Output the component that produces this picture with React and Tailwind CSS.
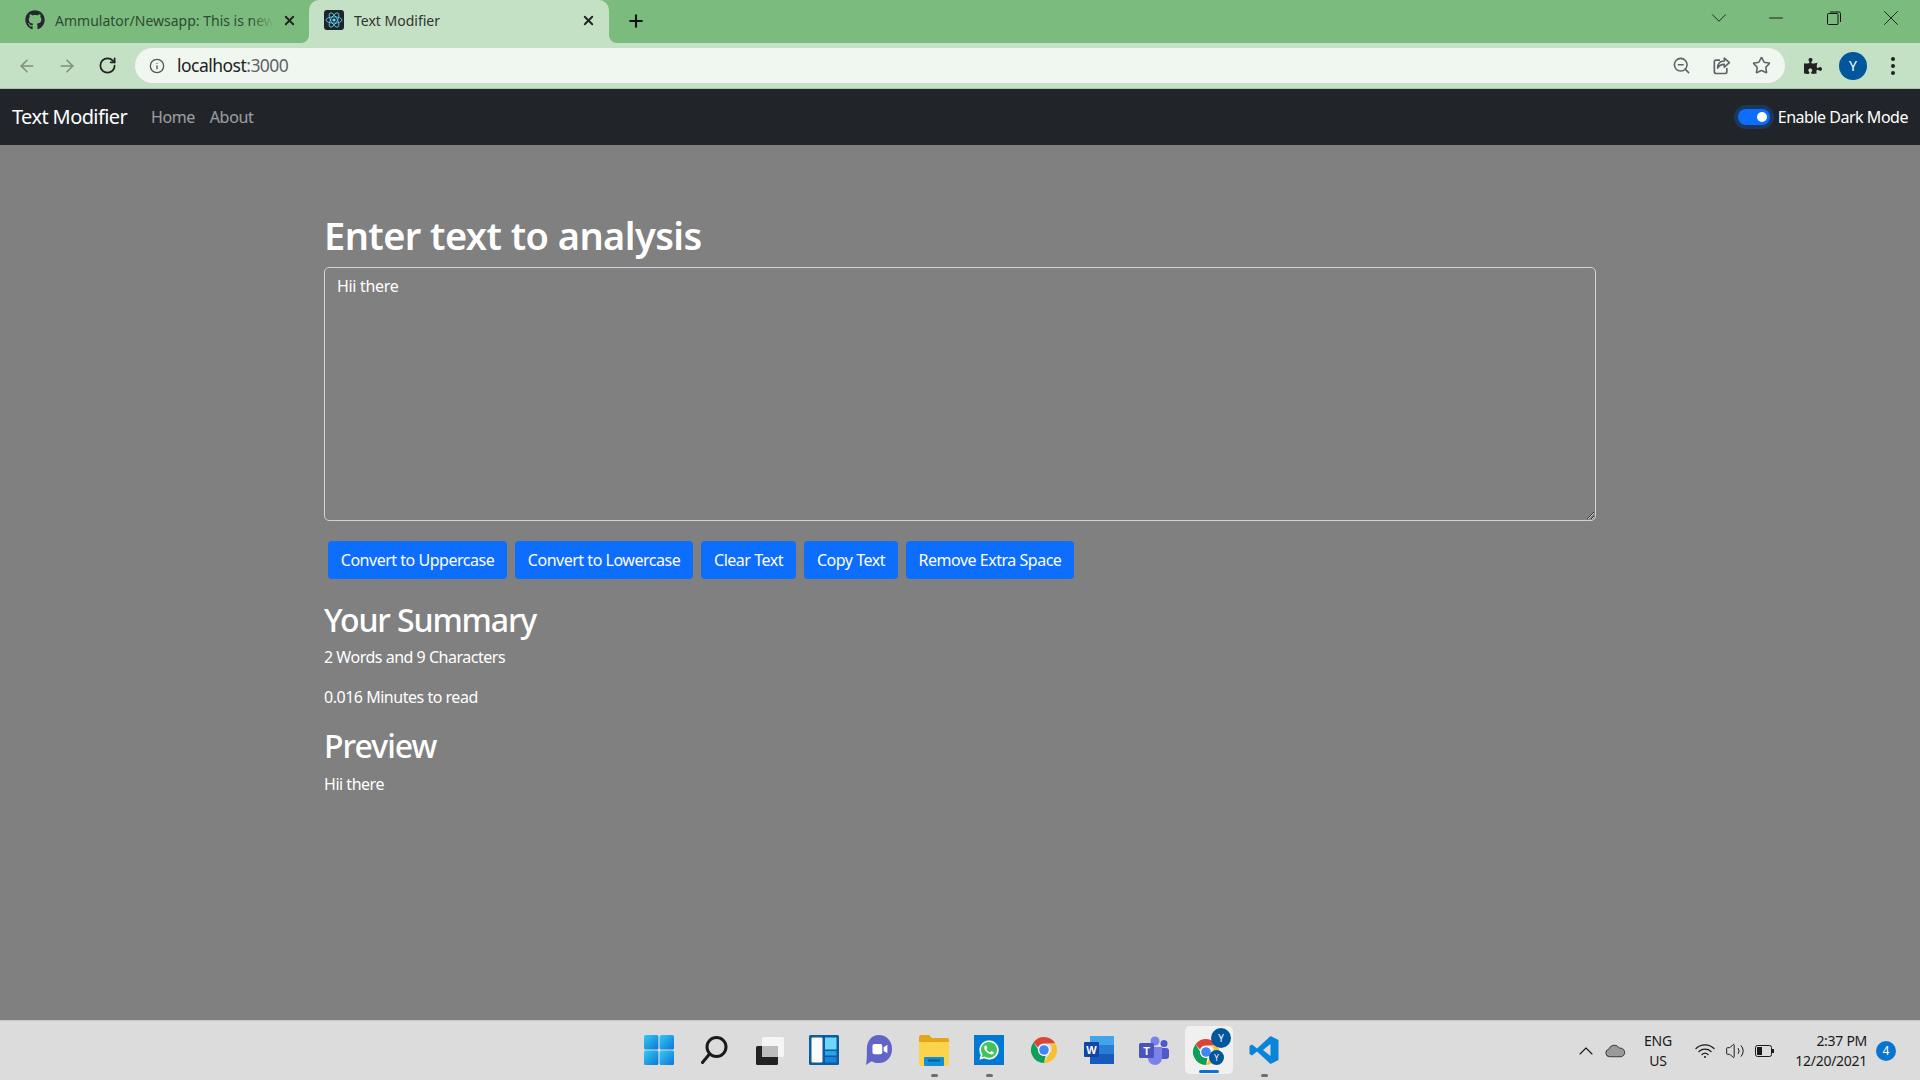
import React from 'react';
import { ArrowLeft, ArrowRight, RotateCw, Info, ZoomOut, Star, X, Plus, ChevronDown, ChevronUp, Minus, Volume2 } from 'lucide-react';
import { FaGithub, FaWhatsapp, FaPuzzlePiece } from 'react-icons/fa';

const font = 'font-["Noto_Sans",sans-serif]';

function ReactLogo() {
  return (
    <svg viewBox="0 0 20 20" className="w-5 h-5 rounded-[3px] bg-[#20232a] shrink-0">
      <circle cx="10" cy="10" r="1.6" fill="#61dafb" />
      <g fill="none" stroke="#61dafb" strokeWidth="0.8">
        <ellipse cx="10" cy="10" rx="8" ry="3.2" />
        <ellipse cx="10" cy="10" rx="8" ry="3.2" transform="rotate(60 10 10)" />
        <ellipse cx="10" cy="10" rx="8" ry="3.2" transform="rotate(120 10 10)" />
      </g>
    </svg>
  );
}

function ChromeLogo({ size = 28 }) {
  return (
    <svg viewBox="0 0 28 28" width={size} height={size}>
      <path d="M14 1a13 13 0 0 1 11.3 6.5H14a6.5 6.5 0 0 0-6 4L3.6 6.2A13 13 0 0 1 14 1z" fill="#db4437" />
      <path d="M25.3 7.5A13 13 0 0 1 14 27l5.6-9.7a6.5 6.5 0 0 0 0-9.8z" fill="#fbc02d" />
      <path d="M14 27A13 13 0 0 1 3.6 6.2L8 13.5a6.5 6.5 0 0 0 7.5 6.3z" fill="#0f9d58" />
      <circle cx="14" cy="14" r="6" fill="#fff" />
      <circle cx="14" cy="14" r="4.8" fill="#4285f4" />
    </svg>
  );
}

function WindowButton({ children }) {
  return <div className="w-[57.5px] h-[36px] flex items-center justify-center text-[#111]">{children}</div>;
}

function BrowserChrome() {
  return (
    <div className={`${font} shrink-0`}>
      <div className="h-[43px] bg-[#7bbc7e] flex items-end">
        <div className="w-[301px] h-full flex items-center pl-[25px] pr-[4px] pb-[3px]">
          <FaGithub className="w-5 h-5 text-[#24292f] shrink-0" />
          <div className="relative ml-[10px] w-[220px] overflow-hidden whitespace-nowrap text-[14px] text-[#2f4a32]">
            Ammulator/Newsapp: This is new
            <div className="absolute right-0 top-0 bottom-0 w-[24px] bg-gradient-to-r from-transparent to-[#7bbc7e]"></div>
          </div>
          <X className="w-[15px] h-[15px] ml-[8px] text-[#222]" strokeWidth={3} />
        </div>
        <div className="w-2 h-2 bg-[#c4e1c5]"><div className="w-full h-full bg-[#7bbc7e] rounded-br-lg"></div></div>
        <div className="w-[300px] h-[43px] bg-[#c4e1c5] rounded-t-[10px] flex items-center pl-[15px] pr-[13px] pb-[3px]">
          <ReactLogo />
          <span className="ml-[10px] flex-1 text-[14px] text-[#333]">Text Modifier</span>
          <X className="w-[15px] h-[15px] text-[#222]" strokeWidth={3} />
        </div>
        <div className="w-2 h-2 bg-[#c4e1c5]"><div className="w-full h-full bg-[#7bbc7e] rounded-bl-lg"></div></div>
        <div className="h-full flex items-center ml-[9px] pb-[1px]">
          <Plus className="w-[20px] h-[20px] text-[#111]" strokeWidth={2.5} />
        </div>
        <div className="ml-auto h-full flex items-start">
          <WindowButton><ChevronDown className="w-[26px] h-[26px]" strokeWidth={0.8} /></WindowButton>
          <WindowButton><Minus className="w-[22px] h-[22px]" strokeWidth={1} /></WindowButton>
          <WindowButton>
            <svg viewBox="0 0 14 14" className="w-[14px] h-[14px]" fill="none" stroke="#111" strokeWidth="1">
              <rect x="0.5" y="2.5" width="10.5" height="11" rx="1" />
              <path d="M3 1h9a1.5 1.5 0 0 1 1.5 1.5V11" />
            </svg>
          </WindowButton>
          <WindowButton><X className="w-[26px] h-[26px]" strokeWidth={0.8} /></WindowButton>
        </div>
      </div>
      <div className="h-[46px] bg-[#c4e1c5] border-b border-[#a9c4aa] flex items-center">
        <ArrowLeft className="w-[20px] h-[20px] ml-[17px] text-[#7d8f7e]" strokeWidth={1.8} />
        <ArrowRight className="w-[20px] h-[20px] ml-[20px] text-[#7d8f7e]" strokeWidth={1.8} />
        <RotateCw className="w-[19px] h-[19px] ml-[21px] text-[#222]" strokeWidth={2.2} />
        <div className="w-[1650px] h-[35px] ml-[18px] rounded-full bg-[#f0f7f0] flex items-center pl-[14px] pr-[14px]">
          <Info className="w-[16px] h-[16px] text-[#555]" strokeWidth={2} />
          <span className="ml-[12px] text-[17.5px] tracking-[-0.03em] text-[#202124]">localhost<span className="text-[#5f6368]">:3000</span></span>
          <ZoomOut className="w-[19px] h-[19px] ml-auto text-[#5f6368]" strokeWidth={2} />
          <svg viewBox="0 0 24 24" className="w-[20px] h-[20px] ml-[20px]" fill="none" stroke="#5f6368" strokeWidth="2" strokeLinejoin="round" strokeLinecap="round">
            <path d="M10 5H6a2 2 0 0 0-2 2v12a2 2 0 0 0 2 2h11a2 2 0 0 0 2-2v-4" />
            <path d="M22 8l-6-5.500v3.500c-5 0-8 3-8 8.500 2-3.500 4.500-4.500 8-4.500v3.500z" />
          </svg>
          <Star className="w-[19px] h-[19px] ml-[21px] text-[#5f6368]" strokeWidth={2} />
        </div>
        <FaPuzzlePiece className="w-[18px] h-[18px] ml-[19px] text-[#222]" />
        <div className="w-[28px] h-[28px] ml-[17px] rounded-full bg-[#01579b] flex items-center justify-center text-white text-[14px]">Y</div>
        <div className="ml-[24px] flex flex-col gap-[3px]">
          <div className="w-[4px] h-[4px] rounded-full bg-[#222]"></div>
          <div className="w-[4px] h-[4px] rounded-full bg-[#222]"></div>
          <div className="w-[4px] h-[4px] rounded-full bg-[#222]"></div>
        </div>
      </div>
    </div>
  );
}

function Navbar() {
  return (
    <nav className={`${font} h-[56px] shrink-0 bg-[#212529] flex items-center pl-[12px] pr-[12px]`}>
      <span className="text-[20px] tracking-[-0.03em] text-white">Text Modifier</span>
      <a className="ml-[24px] text-[16px] tracking-[-0.03em] text-white/55">Home</a>
      <a className="ml-[15px] text-[16px] tracking-[-0.02em] text-white/55">About</a>
      <div className="ml-auto flex items-center">
        <div className="w-[32px] h-[16px] rounded-full bg-[#0d6efd] flex items-center justify-end pr-[3px] ring-4 ring-[#0d6efd]/25">
          <div className="w-[10px] h-[10px] rounded-full bg-white"></div>
        </div>
        <span className="ml-[8px] text-[16px] tracking-[-0.03em] text-white">Enable Dark Mode</span>
      </div>
    </nav>
  );
}

function Main() {
  const buttons = [
    { label: 'Convert to Uppercase', w: 'w-[179px]' },
    { label: 'Convert to Lowercase', w: 'w-[178px]' },
    { label: 'Clear Text', w: 'w-[95px]' },
    { label: 'Copy Text', w: 'w-[94px]' },
    { label: 'Remove Extra Space', w: 'w-[168px]' },
  ];

  return (
    <main className={`${font} flex-1 bg-[#808080] text-white overflow-hidden`}>
      <div className="w-[1272px] ml-[324px]">
        <h1 className="mt-[63px] mb-[5px] text-[38px] leading-[54px] font-semibold tracking-[-0.015em]">Enter text to analysis</h1>
        <textarea
          readOnly
          defaultValue="Hii there"
          className="block w-full h-[254px] bg-[#808080] border border-[#ced4da] rounded-[5px] px-[12px] py-[6px] text-[16px] leading-[24px] tracking-[-0.02em] text-white outline-none resize-y"
        />
        <div className="mt-[20px] ml-[4px] flex gap-[8px]">
          {buttons.map((b) => (
            <button key={b.label} className={`${b.w} h-[38px] bg-[#0d6efd] rounded-[4px] text-[16px] tracking-[-0.03em] text-white`}>
              {b.label}
            </button>
          ))}
        </div>
        <h2 className="mt-[20px] text-[32px] leading-[42px] font-medium tracking-[-0.035em]">Your Summary</h2>
        <p className="mt-[4px] text-[16px] leading-[24px] tracking-[-0.03em]">2 Words and 9 Characters</p>
        <p className="mt-[16px] text-[16px] leading-[24px] tracking-[-0.03em]">0.016 Minutes to read</p>
        <h2 className="mt-[16px] text-[32px] leading-[42px] font-medium tracking-[-0.03em]">Preview</h2>
        <p className="mt-[5px] text-[16px] leading-[24px] tracking-[-0.03em]">Hii there</p>
      </div>
    </main>
  );
}

function TaskIcon({ children, dot, active }) {
  return (
    <div className={`relative w-[48px] h-[48px] flex items-center justify-center rounded-[5px] ${active ? 'bg-[#f0f0f0]' : ''}`}>
      {children}
      {dot && <div className="absolute bottom-[-3px] w-[7px] h-[3px] rounded-full bg-[#6d6d6d]"></div>}
      {active && <div className="absolute bottom-[1px] w-[20px] h-[3px] rounded-full bg-[#0a74d1]"></div>}
    </div>
  );
}

function Taskbar() {
  return (
    <div className={`${font} h-[60px] shrink-0 bg-[#dcdcdc] border-t border-[#c8c8c8] grid grid-cols-[1fr_auto_1fr] items-center`}>
      <div></div>
      <div className="flex items-center gap-[7px] ml-[3px] mb-[1px]">
        <TaskIcon>
          <svg viewBox="0 0 30 30" width="30" height="30">
            <defs>
              <linearGradient id="win" x1="0" y1="0" x2="1" y2="1"><stop offset="0" stopColor="#35c8f5" /><stop offset="1" stopColor="#0a78d6" /></linearGradient>
            </defs>
            <rect x="0" y="0" width="14.4" height="14.4" rx="1.5" fill="url(#win)" />
            <rect x="15.6" y="0" width="14.4" height="14.4" rx="1.5" fill="url(#win)" />
            <rect x="0" y="15.6" width="14.4" height="14.4" rx="1.5" fill="url(#win)" />
            <rect x="15.6" y="15.6" width="14.4" height="14.4" rx="1.5" fill="url(#win)" />
          </svg>
        </TaskIcon>
        <TaskIcon>
          <svg viewBox="0 0 30 30" width="30" height="30" fill="none" stroke="#1a1a1a" strokeWidth="3" strokeLinecap="round">
            <circle cx="17.5" cy="12" r="9.5" />
            <path d="M10.5 19 L3.5 27.5" />
          </svg>
        </TaskIcon>
        <TaskIcon>
          <svg viewBox="0 0 30 30" width="30" height="30">
            <rect x="2" y="11" width="22" height="19" rx="1.5" fill="#222" />
            <rect x="8" y="2" width="22" height="20" rx="1.5" fill="#f5f5f5" />
            <rect x="8" y="11" width="16" height="11" fill="#bdbdbd" />
          </svg>
        </TaskIcon>
        <TaskIcon>
          <svg viewBox="0 0 30 30" width="30" height="30">
            <rect x="0" y="0" width="30" height="30" rx="1.5" fill="#0d5a9e" />
            <rect x="2.5" y="2.5" width="11" height="25" rx="1" fill="#fafafa" />
            <rect x="16" y="2.5" width="11.5" height="12" fill="#6ed6f7" />
            <rect x="16" y="16" width="11.5" height="4.5" fill="#2aa5ea" />
            <rect x="16" y="22" width="11.5" height="5.5" fill="#1487dc" />
          </svg>
        </TaskIcon>
        <TaskIcon>
          <svg viewBox="0 0 30 34" width="28" height="32">
            <path d="M15 1c8 0 14 6.5 14 15s-6 15-14 15c-3 0-6-.6-8-2L1 33c1-4 1-8 1-17C2 7.500 7 1 15 1z" fill="#6264c8" />
            <rect x="8" y="10.500" width="10.500" height="11" rx="2" fill="#fff" />
            <path d="M20 14l4-2.500v9L20 18z" fill="#fff" />
          </svg>
        </TaskIcon>
        <TaskIcon dot>
          <svg viewBox="0 0 30 34" width="30" height="34">
            <path d="M0 4a2 2 0 0 1 2-2h8l3 3h15a2 2 0 0 1 2 2v4H0z" fill="#e6a417" />
            <path d="M0 9h30v22a2 2 0 0 1-2 2H2a2 2 0 0 1-2-2z" fill="#fcd34d" />
            <rect x="5" y="24" width="20" height="9" rx="1" fill="#0f8fd6" />
            <rect x="9" y="26.500" width="12" height="2" fill="#0c5f96" />
          </svg>
        </TaskIcon>
        <TaskIcon dot>
          <div className="w-[30px] h-[30px] bg-[#0078d4] flex items-center justify-center">
            <div className="w-[20px] h-[20px] rounded-full bg-[#3fc35a] flex items-center justify-center">
              <FaWhatsapp className="w-[22px] h-[22px] text-white shrink-0" />
            </div>
          </div>
        </TaskIcon>
        <TaskIcon><ChromeLogo /></TaskIcon>
        <TaskIcon>
          <svg viewBox="0 0 30 30" width="30" height="30">
            <rect x="6" y="1" width="24" height="9" fill="#41a5ee" />
            <rect x="6" y="10" width="24" height="9" fill="#2b7cd3" />
            <rect x="6" y="19" width="24" height="10" fill="#185abd" />
            <rect x="0" y="7" width="15" height="15" rx="1" fill="#1046a8" />
            <text x="7.500" y="18.500" textAnchor="middle" fontSize="11" fontWeight="700" fill="#fff" fontFamily="Liberation Sans, sans-serif">W</text>
          </svg>
        </TaskIcon>
        <TaskIcon>
          <svg viewBox="0 0 30 30" width="30" height="30">
            <circle cx="25" cy="8.500" r="3.500" fill="#5059c9" />
            <rect x="20" y="13" width="10" height="11" rx="3" fill="#5059c9" />
            <circle cx="16" cy="6" r="4.500" fill="#7b83eb" />
            <path d="M9 12h14v11a7 7 0 0 1-14 0z" fill="#7b83eb" />
            <rect x="0" y="8" width="15" height="15" rx="1.500" fill="#4b53bc" />
            <text x="7.500" y="19.500" textAnchor="middle" fontSize="11" fontWeight="700" fill="#fff" fontFamily="Liberation Sans, sans-serif">T</text>
          </svg>
        </TaskIcon>
        <TaskIcon active>
          <div className="mt-[3px] mr-[6px]"><ChromeLogo /></div>
          <div className="absolute right-[2px] top-[2px] w-[20px] h-[20px] rounded-full bg-[#01579b] text-white text-[10px] flex items-center justify-center">Y</div>
          <div className="absolute right-[9px] bottom-[9px] w-[15px] h-[15px] rounded-full bg-[#01579b] text-white text-[8px] flex items-center justify-center">Y</div>
        </TaskIcon>
        <TaskIcon dot>
          <svg viewBox="0 0 30 30" width="30" height="30">
            <path d="M21.500 1 L29.500 5 V25 L21.500 29 L8 16.500 L3 20.500 L0.500 19 V11 L3 9.500 L8 13.500 Z M21.500 9 L14 15 L21.500 21 Z" fill="#0a84d8" fillRule="evenodd" />
          </svg>
        </TaskIcon>
      </div>
      <div className="flex items-center justify-end text-[#1a1a1a]">
        <ChevronUp className="w-[24px] h-[24px]" strokeWidth={1.1} />
        <svg viewBox="0 0 22 14" className="w-[21px] h-[14px] ml-[7px]">
          <path d="M5 13a4 4 0 0 1-1-7.900A6 6 0 0 1 15 4a4.500 4.500 0 0 1 2 9z" fill="#9a9a9a" stroke="#333" strokeWidth="1" />
        </svg>
        <div className="ml-[16px] w-[32px] text-center text-[14px] leading-[20px] tracking-[-0.02em]">
          <div>ENG</div>
          <div>US</div>
        </div>
        <svg viewBox="0 0 20 16" className="w-[20px] h-[16px] ml-[21px]" fill="none" stroke="#1a1a1a" strokeWidth="1.300" strokeLinecap="round">
          <path d="M1 5.500a13 13 0 0 1 18 0" />
          <path d="M4 8.500a9 9 0 0 1 12 0" />
          <path d="M7 11.500a4.500 4.500 0 0 1 6 0" />
          <circle cx="10" cy="14" r="1" fill="#1a1a1a" stroke="none" />
        </svg>
        <Volume2 className="w-[20px] h-[20px] ml-[10px]" strokeWidth={1.2} />
        <svg viewBox="0 0 20 12" className="w-[20px] h-[12px] ml-[10px]" fill="none">
          <rect x="0.500" y="0.500" width="16" height="11" rx="2" stroke="#1a1a1a" />
          <rect x="2" y="2" width="5" height="8" fill="#1a1a1a" />
          <rect x="17" y="4" width="2" height="4" fill="#1a1a1a" />
        </svg>
        <div className="ml-[14px] w-[78px] text-right text-[14px] leading-[20px] tracking-[-0.02em]">
          <div>2:37 PM</div>
          <div>12/20/2021</div>
        </div>
        <div className="ml-[9px] mr-[24px] w-[20px] h-[20px] rounded-full bg-[#0a74d1] text-white text-[12px] flex items-center justify-center">4</div>
      </div>
    </div>
  );
}

export default function App() {
  return (
    <div className="w-[1920px] h-[1080px] flex flex-col overflow-hidden">
      <BrowserChrome />
      <Navbar />
      <Main />
      <Taskbar />
    </div>
  );
}
